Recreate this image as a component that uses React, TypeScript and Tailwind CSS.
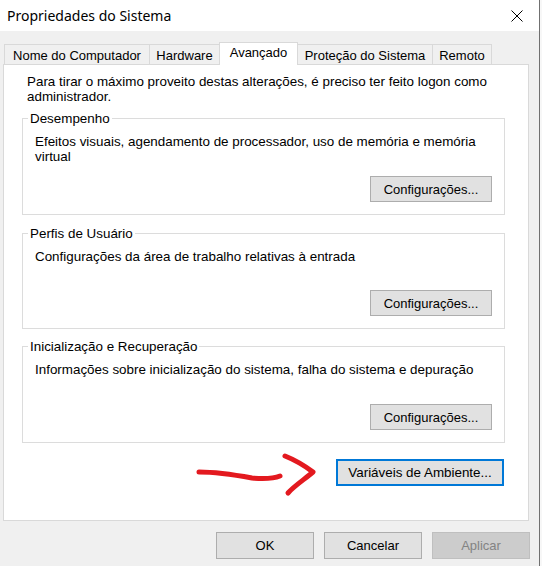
import React from "react";

const tabs = [
  { label: "Nome do Computador", w: "w-[146px]" },
  { label: "Hardware", w: "w-[71px]" },
  { label: "Avançado", w: "w-[79px]", active: true },
  { label: "Proteção do Sistema", w: "w-[136px]" },
  { label: "Remoto", w: "w-[60px]" },
];

function GroupBox({
  title,
  h,
  mt,
  children,
}: {
  title: string;
  h: string;
  mt: string;
  children: React.ReactNode;
}) {
  return (
    <div className={`relative ml-[18px] w-[483px] ${h} ${mt} flex flex-col border border-[#dcdcdc]`}>
      <span className="absolute left-[5px] -top-[8px] bg-white px-[2px] text-[13.4px] leading-[15px]">{title}</span>
      <p className="pl-[12px] pt-[15px] text-[13.4px] leading-[15px]">{children}</p>
      <button className="mt-auto mb-[12px] mr-[12px] self-end w-[122px] h-[26px] border border-[#adadad] bg-[#e1e1e1] leading-none">
        Configurações...
      </button>
    </div>
  );
}

export default function App() {
  return (
    <div className="relative w-[542px] h-[566px] flex overflow-hidden bg-white font-['Liberation_Sans',Arial,sans-serif] text-[13px] text-black">
      <div className="w-[540px] h-full flex flex-col bg-[#f0f0f0] border-r border-[#707070]">
        {/* Title bar */}
        <div className="h-[31px] shrink-0 bg-white flex items-center justify-between pl-[7px] pr-[16px]">
          <span className="font-['Noto_Sans',sans-serif] text-[14px] leading-none">Propriedades do Sistema</span>
          <svg width="12" height="12" viewBox="0 0 12 12" className="text-black">
            <path d="M0.5 0.5 L11.5 11.5 M11.5 0.5 L0.5 11.5" stroke="currentColor" strokeWidth="1" fill="none" />
          </svg>
        </div>

        {/* Tabs */}
        <div className="mt-[11px] ml-[4px] h-[22px] flex items-end">
          {tabs.map((t, i) =>
            t.active ? (
              <div
                key={t.label}
                className={`relative z-10 -mb-px -ml-px ${t.w} h-[23px] bg-white border-t border-l border-r border-[#d9d9d9] flex justify-center pt-[2px] leading-[15px]`}
              >
                {t.label}
              </div>
            ) : (
              <div
                key={t.label}
                className={`${i > 0 ? "-ml-px" : ""} ${t.w} h-[20px] bg-[#f0f0f0] border-t border-l border-r border-[#d9d9d9] flex justify-center pt-[3px] leading-[15px]`}
              >
                {t.label}
              </div>
            )
          )}
        </div>

        {/* Panel */}
        <div className="ml-[3px] w-[526px] h-[457px] shrink-0 flex flex-col bg-white border border-[#d9d9d9]">
          <p className="pl-[23px] pt-[9px] text-[13.4px] leading-[15px]">
            Para tirar o máximo proveito destas alterações, é preciso ter feito logon como
            <br />
            administrador.
          </p>

          <GroupBox title="Desempenho" h="h-[97px]" mt="mt-[14px]">
            Efeitos visuais, agendamento de processador, uso de memória e memória
            <br />
            virtual
          </GroupBox>

          <GroupBox title="Perfis de Usuário" h="h-[96px]" mt="mt-[18px]">
            Configurações da área de trabalho relativas à entrada
          </GroupBox>

          <GroupBox title="Inicialização e Recuperação" h="h-[97px]" mt="mt-[17px]">
            Informações sobre inicialização do sistema, falha do sistema e depuração
          </GroupBox>

          <button className="mt-[16px] mr-[24px] self-end w-[168px] h-[27px] border-2 border-[#0078d7] bg-[#e1e1e1] text-[13.4px] leading-none">
            Variáveis de Ambiente...
          </button>
        </div>

        {/* Dialog buttons */}
        <div className="mt-[11px] pr-[9px] flex justify-end gap-[10px]">
          <button className="w-[98px] h-[27px] border border-[#adadad] bg-[#e1e1e1] leading-none">OK</button>
          <button className="w-[98px] h-[27px] border border-[#adadad] bg-[#e1e1e1] leading-none">Cancelar</button>
          <button className="w-[98px] h-[27px] border border-[#bfbfbf] bg-[#cccccc] text-[#838383] leading-none">
            Aplicar
          </button>
        </div>
      </div>
      <div className="flex-1 bg-[#f7f7f7]" />

      {/* Red hand-drawn arrow annotation */}
      <svg
        className="absolute left-[190px] top-[448px] pointer-events-none"
        width="130"
        height="55"
        viewBox="0 0 130 55"
      >
        <path
          d="M9 24 C 25 24, 40 26, 62 30 C 75 31, 85 30, 90 28"
          stroke="#e3191f"
          strokeWidth="5"
          strokeLinecap="round"
          fill="none"
        />
        <path
          d="M95 8 C 105 12, 115 18, 123 24 C 115 31, 104 38, 98 45"
          stroke="#e3191f"
          strokeWidth="5"
          strokeLinecap="round"
          strokeLinejoin="round"
          fill="none"
        />
      </svg>
    </div>
  );
}
